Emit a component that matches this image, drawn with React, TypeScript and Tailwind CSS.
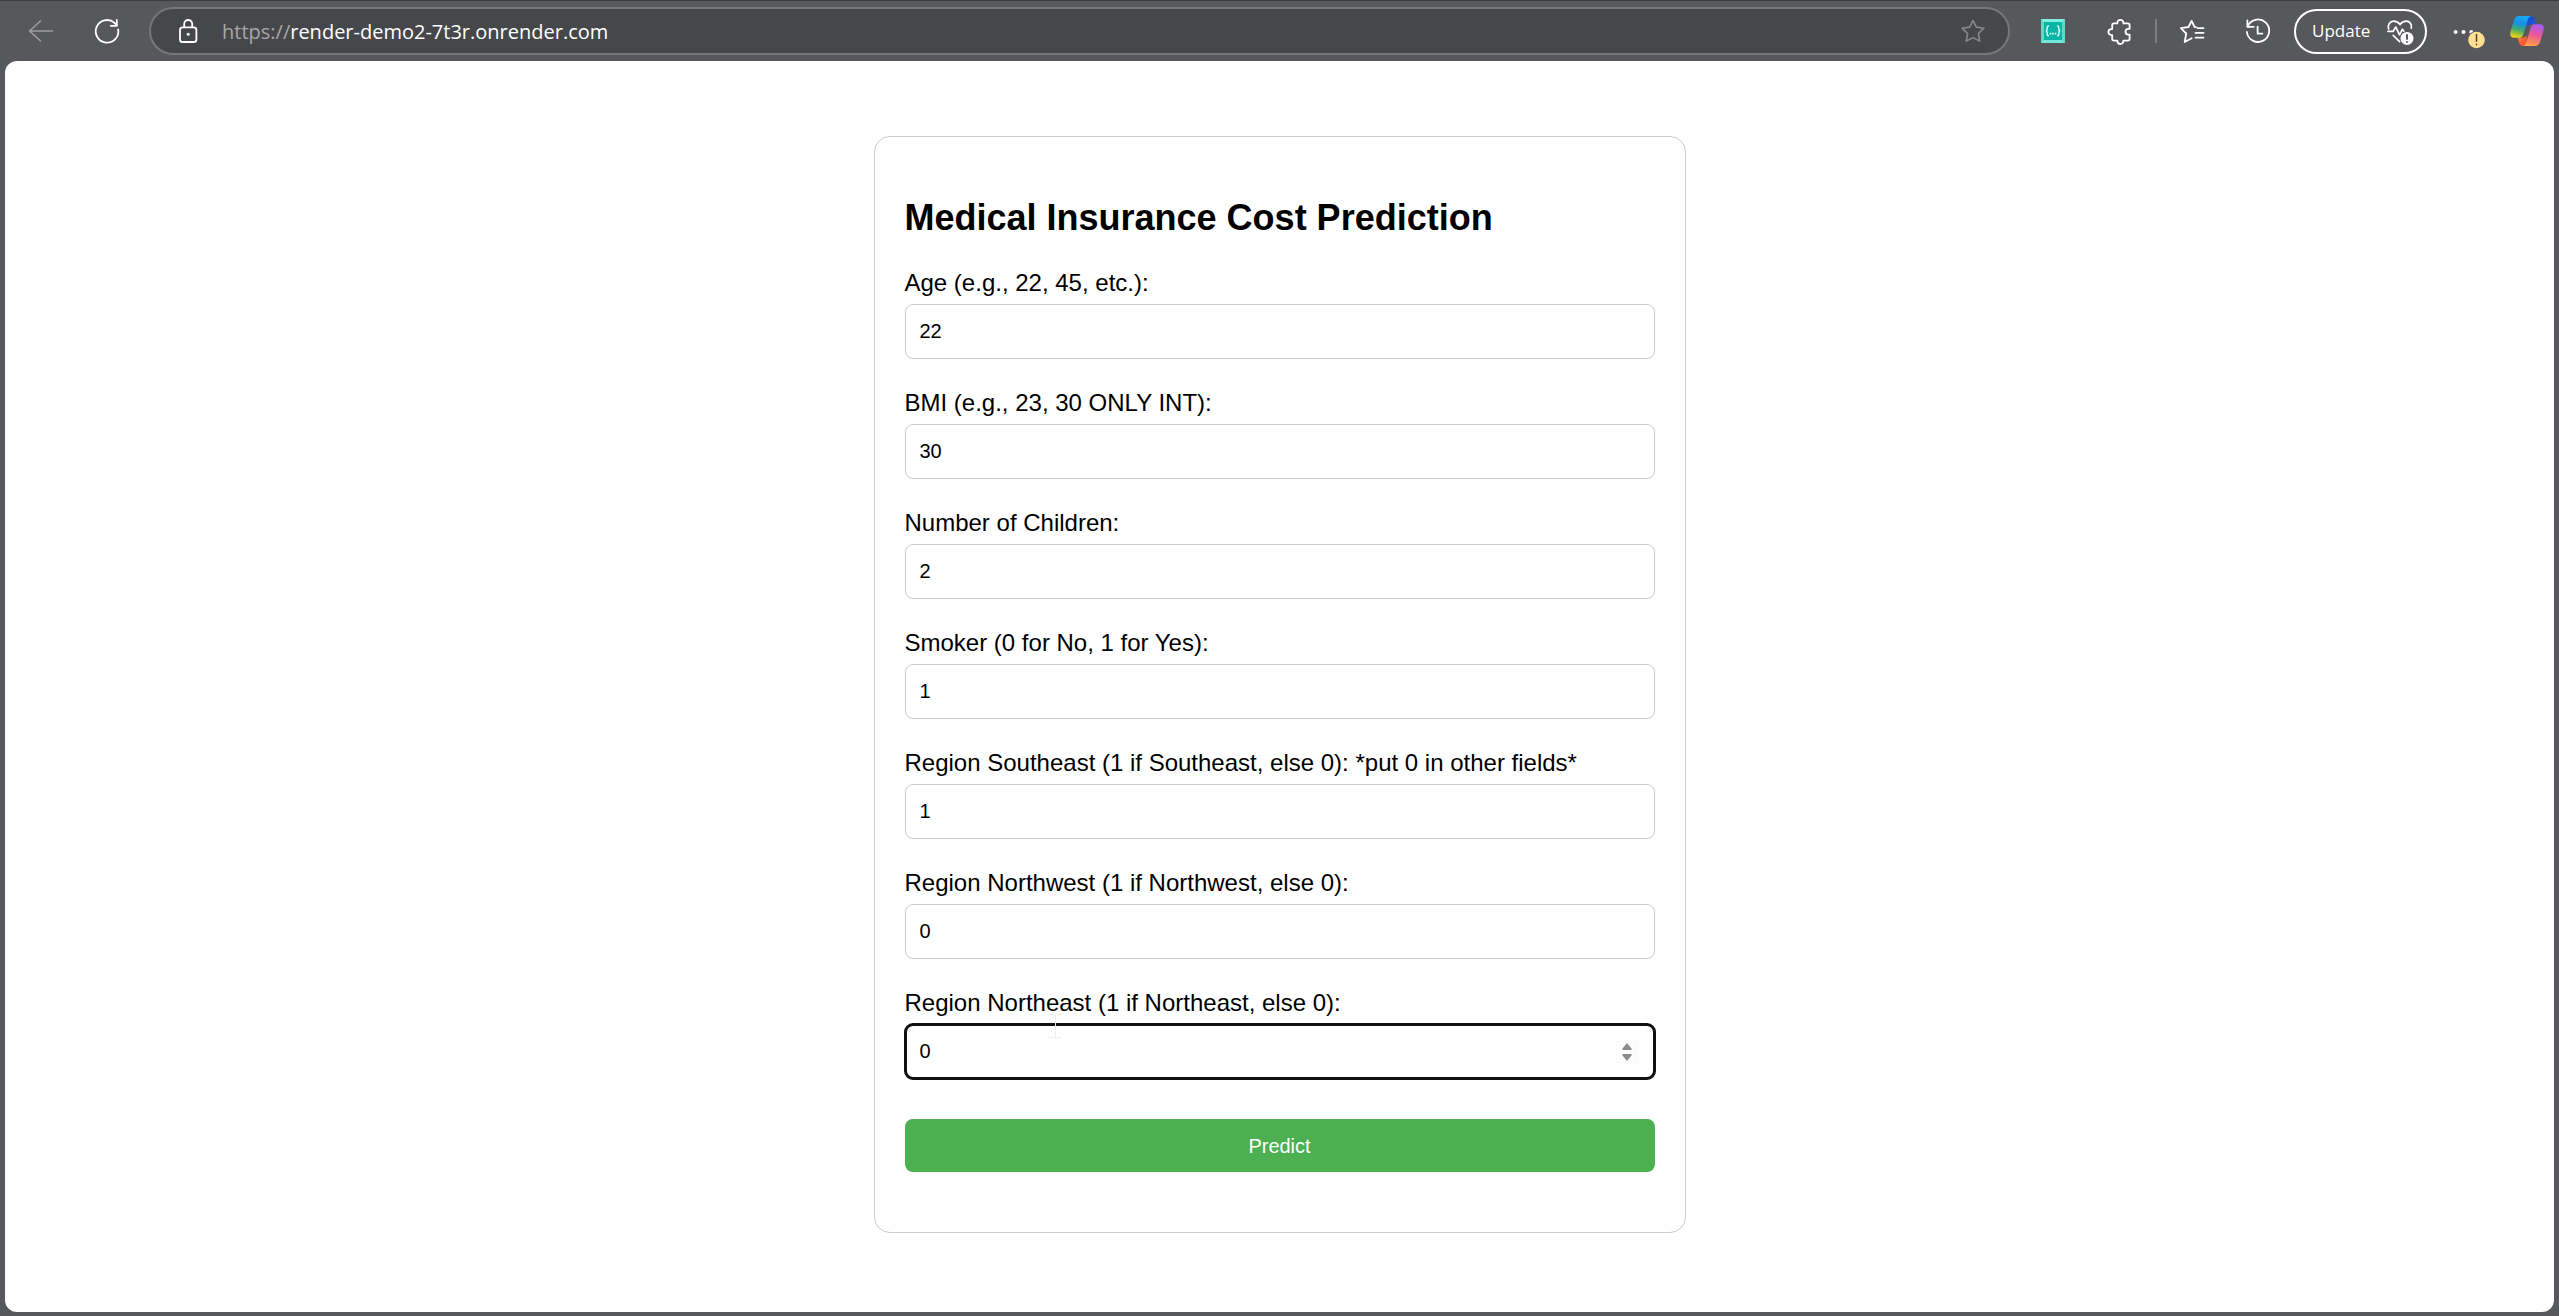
import { useState } from "react";

function BackIcon() {
  return (
    <svg viewBox="0 0 28 28" className="size-7" fill="none" stroke="#9d9da0" strokeWidth="1.6" strokeLinecap="round" strokeLinejoin="round" aria-hidden="true">
      <path d="M25.5 14H2.5M13.5 4 2.5 14l11 10" />
    </svg>
  );
}

function ReloadIcon() {
  return (
    <svg viewBox="0 0 28 28" className="size-7" fill="none" stroke="#fff" strokeWidth="1.8" strokeLinecap="round" strokeLinejoin="round" aria-hidden="true">
      <path d="M25.2 12.5A11.3 11.3 0 1 1 21.2 5.6L23.8 8.4" />
      <path d="M23.8 2.8v6h-6" />
    </svg>
  );
}

function LockIcon() {
  return (
    <svg viewBox="0 0 28 28" className="size-7 shrink-0" fill="none" stroke="#fff" strokeWidth="1.8" aria-hidden="true">
      <rect x="6" y="10.4" width="16.4" height="14.6" rx="2.6" />
      <path d="M10.2 10.2V7a4 4 0 0 1 8 0v3.2" />
      <circle cx="14.2" cy="17.3" r="1.5" fill="#fff" stroke="none" />
    </svg>
  );
}

function StarIcon() {
  return (
    <svg viewBox="0 0 28 28" className="size-7" fill="none" stroke="#87888b" strokeWidth="1.6" strokeLinejoin="round" aria-hidden="true">
      <path d="M14 3.4 17.3 10.1l7.6 1.1-5.5 5.3 1.3 7.6L14 20.6l-6.7 3.5 1.3-7.6-5.5-5.3 7.6-1.1z" />
    </svg>
  );
}

function BracesIcon() {
  return (
    <svg viewBox="0 0 28 28" className="size-7" aria-hidden="true">
      <rect x="2" y="2" width="24" height="24" rx="1" fill="#5fd9c6" />
      <path d="M2 2h24l-3 3H5z" fill="#7df0de" />
      <path d="M2 26h24l-3-3H5z" fill="#6feadb" />
      <rect x="5" y="5" width="18" height="18" fill="#0bb5a3" />
      <path d="M9.9 9c-1.8 0-1.7.9-1.7 2.500 0 1.600-.2 2.400-1.500 2.400 1.300 0 1.500.8 1.500 2.400 0 1.600-.1 2.500 1.700 2.500M18.100 9c1.800 0 1.700.9 1.700 2.500 0 1.600.2 2.400 1.500 2.400-1.300 0-1.500.8-1.500 2.400 0 1.600.1 2.500-1.700 2.500" fill="none" stroke="#effffc" strokeWidth="1.400" />
      <path d="M10.600 15.800h1.600v1.600h-1.600zM13.200 15.800h1.600v1.600h-1.600zM15.800 15.800h1.600v1.600h-1.600z" fill="#effffc" />
    </svg>
  );
}

function PuzzleIcon() {
  return (
    <svg viewBox="0 0 28 28" className="size-7" fill="none" stroke="#fff" strokeWidth="1.8" strokeLinejoin="round" aria-hidden="true">
      <path d="M7.2 6.4H11.4V5.8a3 3 0 0 1 6 0V6.4h4.4a1.8 1.8 0 0 1 1.8 1.8v3.6h-1.2a2.9 2.9 0 0 0 0 5.8h1.2v4.2a1.8 1.8 0 0 1-1.8 1.8h-4.4v.4a3 3 0 0 1-6 0v-.4H8a1.8 1.8 0 0 1-1.8-1.8v-3.7H5.4a3 3 0 0 1 0-6h.8V8.2A1.8 1.8 0 0 1 8 6.4" />
    </svg>
  );
}

function FavoritesIcon() {
  return (
    <svg viewBox="0 0 28 28" className="size-7" fill="none" stroke="#fff" strokeWidth="1.8" strokeLinecap="round" strokeLinejoin="round" aria-hidden="true">
      <path d="M18 10.200 16.600 10 13.600 3.800 10.500 10l-7.600 1.200 5.300 5.300L6.700 25l7-3.800" />
      <path d="M17.500 15.900h8M17.500 20.600h8M19.500 11.200h6" />
    </svg>
  );
}

function HistoryIcon() {
  return (
    <svg viewBox="0 0 28 28" className="size-7" fill="none" stroke="#fff" strokeWidth="1.8" strokeLinecap="round" strokeLinejoin="round" aria-hidden="true">
      <path d="M3.6 9.6A11.2 11.2 0 1 1 2.9 15" />
      <path d="M3.4 3.4v6.4h6.4M13.6 9.6v7h4.8" />
    </svg>
  );
}

function HeartAlertIcon() {
  return (
    <svg viewBox="0 0 28 28" className="size-7" fill="none" stroke="#fff" strokeWidth="1.7" strokeLinecap="round" strokeLinejoin="round" aria-hidden="true">
      <path d="M2.6 12C1.2 7.5 4 4.2 7.8 4.2c2.6 0 4.600 1.200 6.200 3.300 1.600-2.100 3.600-3.300 6.200-3.300 3.600 0 6 3 5.100 7" />
      <path d="M2 14.300h5.200l2.600-4.300 3.700 7.800 2.900-5.600 1.400 2" />
      <path d="M7.200 18.300l6.400 6.300" />
      <circle cx="21" cy="21.400" r="6.500" fill="#fff" stroke="none" />
      <path d="M21 17.800v4.200M21 24.900v.1" stroke="#3c3d40" />
    </svg>
  );
}

function MoreIcon() {
  return (
    <svg viewBox="0 0 32 36" className="h-9 w-8" aria-hidden="true">
      <circle cx="2.600" cy="19" r="2" fill="#fff" />
      <circle cx="10.500" cy="19" r="2" fill="#fff" />
      <circle cx="18.300" cy="19" r="2" fill="#fff" />
      <circle cx="23.500" cy="27" r="9.200" fill="#57585c" />
      <circle cx="23.500" cy="27" r="8.300" fill="#ffdf8e" />
      <path d="M23.500 21.600v6.600M23.500 31.200v.6" stroke="#4a4438" strokeWidth="1.500" strokeLinecap="round" />
    </svg>
  );
}

function CopilotIcon() {
  return (
    <svg viewBox="0 0 34 30" className="h-[30px] w-[34px]" aria-hidden="true">
      <defs>
        <linearGradient id="cp-left" x1="0.600" y1="0" x2="0.350" y2="1">
          <stop offset="0" stopColor="#1aa9f5" />
          <stop offset="0.350" stopColor="#1590e8" />
          <stop offset="0.650" stopColor="#43ad6a" />
          <stop offset="1" stopColor="#f2d514" />
        </linearGradient>
        <linearGradient id="cp-right" x1="0.650" y1="0" x2="0.350" y2="1">
          <stop offset="0" stopColor="#a55cf2" />
          <stop offset="0.450" stopColor="#ec559c" />
          <stop offset="1" stopColor="#ffa23e" />
        </linearGradient>
        <linearGradient id="cp-top" x1="0" y1="0" x2="1" y2="1">
          <stop offset="0" stopColor="#0c4fc4" />
          <stop offset="1" stopColor="#2a56e0" />
        </linearGradient>
        <linearGradient id="cp-bottom" x1="0" y1="0" x2="1" y2="1">
          <stop offset="0" stopColor="#ff8a2a" />
          <stop offset="1" stopColor="#f0433c" />
        </linearGradient>
      </defs>
      <path d="M16 0h4.500c2.400 0 3.600 1.400 4.300 3.500l1.700 4.800h-5c-2.500 0-3.600 1.200-4.300 3.500z" fill="url(#cp-top)" />
      <path d="M17 30h-3.800c-2.400 0-3.500-1.400-4.200-3.500L7.400 21.700h4.800c2.500 0 3.700-1.200 4.400-3.500z" fill="url(#cp-bottom)" />
      <path d="M9.500 0h12c-2.200.4-3.100 1.800-3.900 4.400l-4.300 14c-.7 2.300-2 3.400-4.300 3.400H4.300C1 21.800-.4 19.500.4 16.200L3.700 4.700C4.600 1.700 6.400 0 9.500 0z" fill="url(#cp-left)" />
      <path d="M24.500 30h-12c2.300-.4 3.200-1.800 4-4.400l4.200-13.900c.7-2.300 2-3.400 4.300-3.400h4.700c3.300 0 4.700 2.300 3.900 5.600l-3.300 11.400c-.9 3-2.700 4.700-5.800 4.700z" fill="url(#cp-right)" />
    </svg>
  );
}

function Toolbar() {
  return (
    <header className="flex h-[61px] shrink-0 items-center border-t border-[#3b3c40] pr-[15px] pl-[27px] font-['Open_Sans','Noto_Sans',sans-serif] text-white">
      <button type="button" aria-label="Back" disabled>
        <BackIcon />
      </button>
      <button type="button" aria-label="Reload" className="ml-[38px]">
        <ReloadIcon />
      </button>
      <div className="ml-7 flex h-12 min-w-0 flex-1 items-center rounded-full border-2 border-[#76777a] bg-[#46474a] pr-[21px] pl-[23px]">
        <LockIcon />
        <div className="ml-5 flex-1 truncate pt-0.5 text-[20px] leading-7">
          <span className="text-[#a6a7a9]">https://</span>
          <span>render-demo2-7t3r.onrender.com</span>
        </div>
        <button type="button" aria-label="Add to favorites">
          <StarIcon />
        </button>
      </div>
      <button type="button" aria-label="JSON viewer extension" className="ml-[29px]">
        <BracesIcon />
      </button>
      <button type="button" aria-label="Extensions" className="ml-[39px]">
        <PuzzleIcon />
      </button>
      <div className="mx-[21px] h-6 w-0.5 bg-[#7d7e82]" />
      <button type="button" aria-label="Favorites">
        <FavoritesIcon />
      </button>
      <button type="button" aria-label="History" className="ml-[38px]">
        <HistoryIcon />
      </button>
      <button type="button" className="ml-[22px] flex h-[45px] w-[133px] items-center justify-between rounded-full border-2 border-white pr-[11px] pl-4 text-[17px] leading-6">
        Update
        <HeartAlertIcon />
      </button>
      <button type="button" aria-label="Settings and more" className="ml-[26px]">
        <MoreIcon />
      </button>
      <button type="button" aria-label="Copilot" className="ml-[25px]">
        <CopilotIcon />
      </button>
    </header>
  );
}

const FIELDS = [
  { id: "age", label: "Age (e.g., 22, 45, etc.):", value: "22" },
  { id: "bmi", label: "BMI (e.g., 23, 30 ONLY INT):", value: "30" },
  { id: "children", label: "Number of Children:", value: "2" },
  { id: "smoker", label: "Smoker (0 for No, 1 for Yes):", value: "1" },
  { id: "southeast", label: "Region Southeast (1 if Southeast, else 0): *put 0 in other fields*", value: "1" },
  { id: "northwest", label: "Region Northwest (1 if Northwest, else 0):", value: "0" },
  { id: "northeast", label: "Region Northeast (1 if Northeast, else 0):", value: "0", active: true },
];

function TextCursor() {
  return (
    <svg viewBox="0 0 14 26" className="pointer-events-none absolute top-6 left-[143px] h-[26px] w-3.5" fill="none" stroke="#ececec" strokeWidth="1" aria-hidden="true">
      <path d="M7.500 1v24M1 1.500h5M9 1.500h4M1 24.500h5M9 24.500h4" />
    </svg>
  );
}

function Field({ id, label, value, active }: { id: string; label: string; value: string; active?: boolean }) {
  const [current, setCurrent] = useState(value);
  const step = (delta: number) => setCurrent(String(Number(current) + delta));

  return (
    <div className="relative">
      <label htmlFor={id} className="mb-[7px] block text-[24px] leading-7">
        {label}
      </label>
      <div className="relative">
        <input
          id={id}
          name={id}
          type="number"
          value={current}
          onChange={(e) => setCurrent(e.target.value)}
          className={
            "block h-[55px] w-full [appearance:textfield] rounded-lg border border-[#ccc] bg-white px-[14px] text-[20px] leading-6 " +
            (active ? "outline-3 -outline-offset-2 outline-[#101010]" : "outline-none")
          }
        />
        {active && (
          <div className="absolute inset-y-0 right-4 my-auto flex h-[22px] w-[23px] flex-col items-center justify-center gap-1 bg-[#fcfcfc]">
            <button type="button" aria-label="Increase" onClick={() => step(1)}>
              <svg viewBox="0 0 10 7" className="block h-[7px] w-2.5" fill="#8b8b8b" aria-hidden="true">
                <path d="M5 0 9.500 5.500V7H.5V5.500z" />
              </svg>
            </button>
            <button type="button" aria-label="Decrease" onClick={() => step(-1)}>
              <svg viewBox="0 0 10 7" className="block h-[7px] w-2.5" fill="#8b8b8b" aria-hidden="true">
                <path d="M5 7 .5 1.500V0h9v1.500z" />
              </svg>
            </button>
          </div>
        )}
      </div>
      {active && <TextCursor />}
    </div>
  );
}

export default function App() {
  return (
    <div className="flex min-h-screen flex-col bg-[#57585c]">
      <Toolbar />
      <main className="mx-[5px] mb-1 flex-1 rounded-xl bg-white px-4 pt-[75px] pb-[70px] font-['Liberation_Sans',Arial,sans-serif] text-black">
        <form onSubmit={(e) => e.preventDefault()} className="mx-auto max-w-[812px] rounded-2xl border border-[#ccc] px-[30px] py-[60px]">
          <h1 className="mb-[30px] text-[36px] leading-[42px] font-bold">Medical Insurance Cost Prediction</h1>
          <div className="flex flex-col gap-[30px]">
            {FIELDS.map((field) => (
              <Field key={field.id} {...field} />
            ))}
          </div>
          <button type="submit" className="mt-10 block h-[53px] w-full rounded-lg bg-[#4caf50] text-[20px] leading-6 text-white">
            Predict
          </button>
        </form>
      </main>
    </div>
  );
}
